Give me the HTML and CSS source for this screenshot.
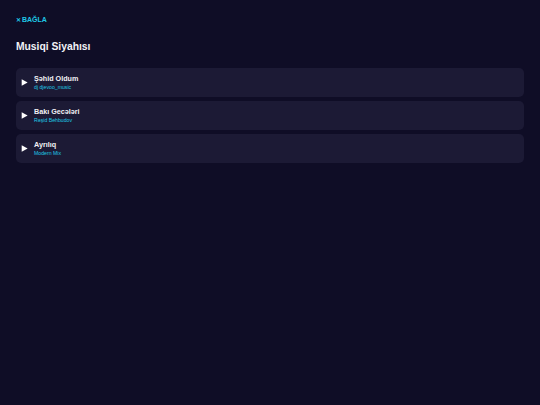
FILE: index.html
```html
<!DOCTYPE html>
<html>
<head>
<meta charset="utf-8">
<link rel="stylesheet" href="styles.css">
</head>
<body>
<div class="page">
  <button class="close"><span class="x">✕</span>BAĞLA</button>
  <h1 class="title">Musiqi Siyahısı</h1>
  <div class="list">
    <div class="item">
      <svg class="play" viewBox="0 0 10 10"><path d="M1 0.5 L9.5 5 L1 9.5 Z" fill="#fff"/></svg>
      <div class="meta"><div class="name">Şəhid Oldum</div><div class="artist">dj djevoo_music</div></div>
    </div>
    <div class="item">
      <svg class="play" viewBox="0 0 10 10"><path d="M1 0.5 L9.5 5 L1 9.5 Z" fill="#fff"/></svg>
      <div class="meta"><div class="name">Bakı Gecələri</div><div class="artist">Rəşid Behbudov</div></div>
    </div>
    <div class="item">
      <svg class="play" viewBox="0 0 10 10"><path d="M1 0.5 L9.5 5 L1 9.5 Z" fill="#fff"/></svg>
      <div class="meta"><div class="name">Ayrılıq</div><div class="artist">Modern Mix</div></div>
    </div>
  </div>
</div>
</body>
</html>
```
FILE: styles.css
```css
html, body { margin: 0; padding: 0; background: #0f0d26; height: 100%; }
body { font-family: "Liberation Sans", Arial, sans-serif; color: #fff; }
.page { padding: 15px 16px; display: flex; flex-direction: column; }
.close { align-self: flex-start; background: none; border: none; padding: 0; color: #1ec8e6; font: 700 7px "Liberation Sans", Arial, sans-serif; line-height: 10px; height: 10px; display: flex; align-items: center; gap: 1px; }
.close .x { font-size: 6px; }
.title { margin: 16px 0 0; font-size: 10.3px; font-weight: 700; line-height: 12px; color: #f2f2f6; }
.list { margin-top: 15px; display: flex; flex-direction: column; gap: 4px; }
.item { background: #1c1a35; border-radius: 5px; height: 29px; display: flex; align-items: center; padding: 0 0 0 5px; box-sizing: border-box; }
.play { width: 7px; height: 7px; margin-right: 6px; }
.meta { display: flex; flex-direction: column; }
.name { font-size: 7.2px; font-weight: 700; line-height: 9px; color: #f2f2f6; }
.artist { font-size: 5.2px; line-height: 8px; color: #1ec8e6; }
```
